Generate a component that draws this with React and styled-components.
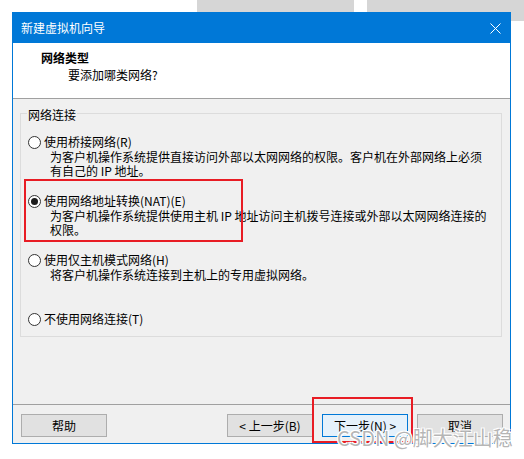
import styled, { createGlobalStyle } from 'styled-components';

const GlobalStyle = createGlobalStyle`
  html, body {
    margin: 0;
    padding: 0;
    background: #ffffff;
  }
  body {
    font-family: "Noto Sans CJK SC", "Noto Sans", sans-serif;
    font-size: 12px;
    color: #000;
  }
`;

const Desktop = styled.div`
  position: relative;
  width: 524px;
  height: 459px;
  box-sizing: border-box;
  padding: 12px 0 0 12px;
  overflow: hidden;
`;

// windows sitting behind the dialog on the desktop
const BackWindow = styled.div`
  position: absolute;
  top: 0;
  left: ${({ left }) => left}px;
  width: ${({ width }) => width}px;
  height: ${({ height }) => height}px;
  background: #d6d6d6;
`;

const Dialog = styled.div`
  position: relative;
  width: 499px;
  box-sizing: border-box;
  border: 1px solid #0078d7;
  background: #f0f0f0;
`;

const TitleBar = styled.div`
  height: 30px;
  background: #0078d7;
  color: #fff;
  display: flex;
  align-items: center;
  justify-content: space-between;
  padding: 0 9px 0 8px;
  line-height: 16px;
`;

const Header = styled.div`
  height: 56px;
  box-sizing: border-box;
  background: #fff;
  padding: 6px 0 0 28px;
  border-bottom: 1px solid #a0a0a0;
  line-height: 17px;
`;

const HeaderTitle = styled.div`
  font-weight: 700;
`;

const HeaderSub = styled.div`
  padding-left: 27px;
`;

const Body = styled.div`
  height: 305px;
  box-sizing: border-box;
  padding: 4px 8px 0 7px;
`;

const GroupBox = styled.fieldset`
  margin: 0;
  min-width: 0;
  border: 1px solid #dcdcdc;
  padding: 11px 8px 9px 7px;
  display: flex;
  flex-direction: column;
  gap: 15px;
`;

const Legend = styled.legend`
  padding: 4px 1px 0;
  margin-left: -1px;
  line-height: 16px;
`;

const Option = styled.div`
  position: relative;
  display: flex;
  flex-direction: column;
`;

const RadioRow = styled.div`
  height: 16px;
  display: flex;
  align-items: center;
  gap: 3px;
  line-height: 16px;
`;

const RadioCircle = styled.span`
  width: 13px;
  height: 13px;
  box-sizing: border-box;
  border: 1px solid #333;
  border-radius: 50%;
  background: #fff;
  display: flex;
  align-items: center;
  justify-content: center;
  &::after {
    content: '';
    width: 7px;
    height: 7px;
    border-radius: 50%;
    background: #1b1b1b;
    display: ${({ checked }) => (checked ? 'block' : 'none')};
  }
`;

const Desc = styled.div`
  height: 28px;
  padding-left: 22px;
  line-height: 14px;
  white-space: nowrap;
`;

const Highlight = styled.div`
  position: absolute;
  top: ${({ top }) => top}px;
  left: ${({ left }) => left}px;
  width: ${({ width }) => width}px;
  height: ${({ height }) => height}px;
  box-sizing: border-box;
  border: 2px solid #e81c24;
  pointer-events: none;
`;

const Footer = styled.div`
  height: 39px;
  box-sizing: border-box;
  border-top: 1px solid #a0a0a0;
  padding: 9px 7px 0 8px;
  display: flex;
  align-items: flex-start;
`;

const NavGroup = styled.div`
  margin-left: auto;
  display: flex;
  gap: 9px;
`;

const ButtonWrap = styled.div`
  position: relative;
`;

const Button = styled.button`
  width: 86px;
  height: 23px;
  box-sizing: border-box;
  border: 1px solid ${({ primary }) => (primary ? '#0078d7' : '#adadad')};
  background: ${({ primary }) => (primary ? '#e5f1fb' : '#e1e1e1')};
  font-family: inherit;
  font-size: 12px;
  color: #000;
  padding: 0;
  line-height: 16px;
`;

const Watermark = styled.div`
  position: absolute;
  left: 337px;
  top: 426px;
  font-size: 20px;
  line-height: 24px;
  color: rgba(150, 150, 150, 0.7);
  text-shadow: 1px 1px 0 #fff, -1px -1px 0 #fff, 1px -1px 0 #fff, -1px 1px 0 #fff;
  white-space: nowrap;
  pointer-events: none;
`;

const CloseIcon = () => (
  <svg width="11" height="11" viewBox="0 0 11 11">
    <path d="M0.5 0.5 L10.5 10.5 M10.5 0.5 L0.5 10.5" stroke="#fff" strokeWidth="1" fill="none" />
  </svg>
);

const options = [
  {
    label: '使用桥接网络(R)',
    desc: ['为客户机操作系统提供直接访问外部以太网网络的权限。客户机在外部网络上必须', '有自己的 IP 地址。'],
  },
  {
    label: '使用网络地址转换(NAT)(E)',
    desc: ['为客户机操作系统提供使用主机 IP 地址访问主机拨号连接或外部以太网网络连接的', '权限。'],
    checked: true,
  },
  {
    label: '使用仅主机模式网络(H)',
    desc: ['将客户机操作系统连接到主机上的专用虚拟网络。'],
  },
  {
    label: '不使用网络连接(T)',
  },
];

export default function App() {
  return (
    <>
      <GlobalStyle />
      <Desktop>
        <BackWindow left={197} width={157} height={12} />
        <BackWindow left={367} width={157} height={21} />
        <Dialog>
          <TitleBar>
            <span>新建虚拟机向导</span>
            <CloseIcon />
          </TitleBar>
          <Header>
            <HeaderTitle>网络类型</HeaderTitle>
            <HeaderSub>要添加哪类网络?</HeaderSub>
          </Header>
          <Body>
            <GroupBox>
              <Legend>网络连接</Legend>
              {options.map((opt) => (
                <Option key={opt.label}>
                  <RadioRow>
                    <RadioCircle checked={opt.checked} />
                    <span>{opt.label}</span>
                  </RadioRow>
                  {opt.desc && (
                    <Desc>
                      {opt.desc.map((line) => (
                        <div key={line}>{line}</div>
                      ))}
                    </Desc>
                  )}
                  {opt.checked && <Highlight top={-14} left={-4} width={219} height={63} />}
                </Option>
              ))}
            </GroupBox>
          </Body>
          <Footer>
            <Button>帮助</Button>
            <NavGroup>
              <Button>&lt; 上一步(B)</Button>
              <ButtonWrap>
                <Button primary>下一步(N) &gt;</Button>
                <Highlight top={-17} left={-10} width={101} height={46} />
              </ButtonWrap>
              <Button>取消</Button>
            </NavGroup>
          </Footer>
        </Dialog>
        <Watermark>CSDN @脚大江山稳</Watermark>
      </Desktop>
    </>
  );
}
